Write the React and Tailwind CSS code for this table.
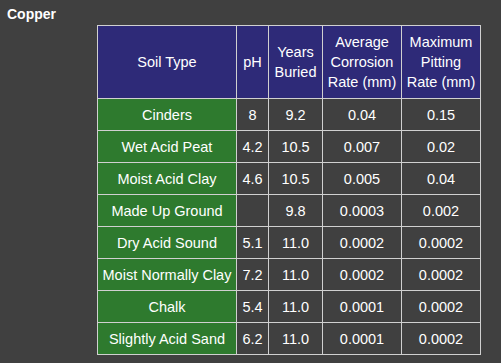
import React from "react";

const rows = [
  { soil: "Cinders", ph: "8", years: "9.2", avg: "0.04", max: "0.15" },
  { soil: "Wet Acid Peat", ph: "4.2", years: "10.5", avg: "0.007", max: "0.02" },
  { soil: "Moist Acid Clay", ph: "4.6", years: "10.5", avg: "0.005", max: "0.04" },
  { soil: "Made Up Ground", ph: "", years: "9.8", avg: "0.0003", max: "0.002" },
  { soil: "Dry Acid Sound", ph: "5.1", years: "11.0", avg: "0.0002", max: "0.0002" },
  { soil: "Moist Normally Clay", ph: "7.2", years: "11.0", avg: "0.0002", max: "0.0002" },
  { soil: "Chalk", ph: "5.4", years: "11.0", avg: "0.0001", max: "0.0002" },
  { soil: "Slightly Acid Sand", ph: "6.2", years: "11.0", avg: "0.0001", max: "0.0002" },
];

const App = () => {
  return (
    <div
      className="w-[501px] h-[363px] bg-[#404040] text-white pt-[6px] pl-[7px]"
      style={{ fontFamily: '"Liberation Sans", Arial, sans-serif' }}
    >
      <h1 className="text-[14px] leading-[16px] font-bold">Copper</h1>

      <table className="ml-[90px] mt-[3px] w-[383px] table-fixed border-collapse text-[14.5px] text-center">
        <colgroup>
          <col className="w-[139px]" />
          <col className="w-[32px]" />
          <col className="w-[54px]" />
          <col className="w-[79px]" />
          <col className="w-[79px]" />
        </colgroup>
        <thead>
          <tr className="bg-[#2e2a78] leading-[20px]">
            <th className="h-[73px] px-[4px] font-normal border border-[#d0d0d0]">Soil Type</th>
            <th className="px-[4px] font-normal border border-[#d0d0d0]">pH</th>
            <th className="px-[4px] font-normal border border-[#d0d0d0]">Years Buried</th>
            <th className="px-[4px] font-normal border border-[#d0d0d0]">Average Corrosion Rate (mm)</th>
            <th className="px-[4px] font-normal border border-[#d0d0d0]">Maximum Pitting Rate (mm)</th>
          </tr>
        </thead>
        <tbody>
          {rows.map((row) => (
            <tr key={row.soil} className="leading-[16px]">
              <td className="h-[32px] px-[4px] bg-[#2e7a2e] border border-[#d0d0d0] whitespace-nowrap">{row.soil}</td>
              <td className="px-[4px] border border-[#d0d0d0]">{row.ph}</td>
              <td className="px-[4px] border border-[#d0d0d0]">{row.years}</td>
              <td className="px-[4px] border border-[#d0d0d0]">{row.avg}</td>
              <td className="px-[4px] border border-[#d0d0d0]">{row.max}</td>
            </tr>
          ))}
        </tbody>
      </table>
    </div>
  );
};

export default App;
